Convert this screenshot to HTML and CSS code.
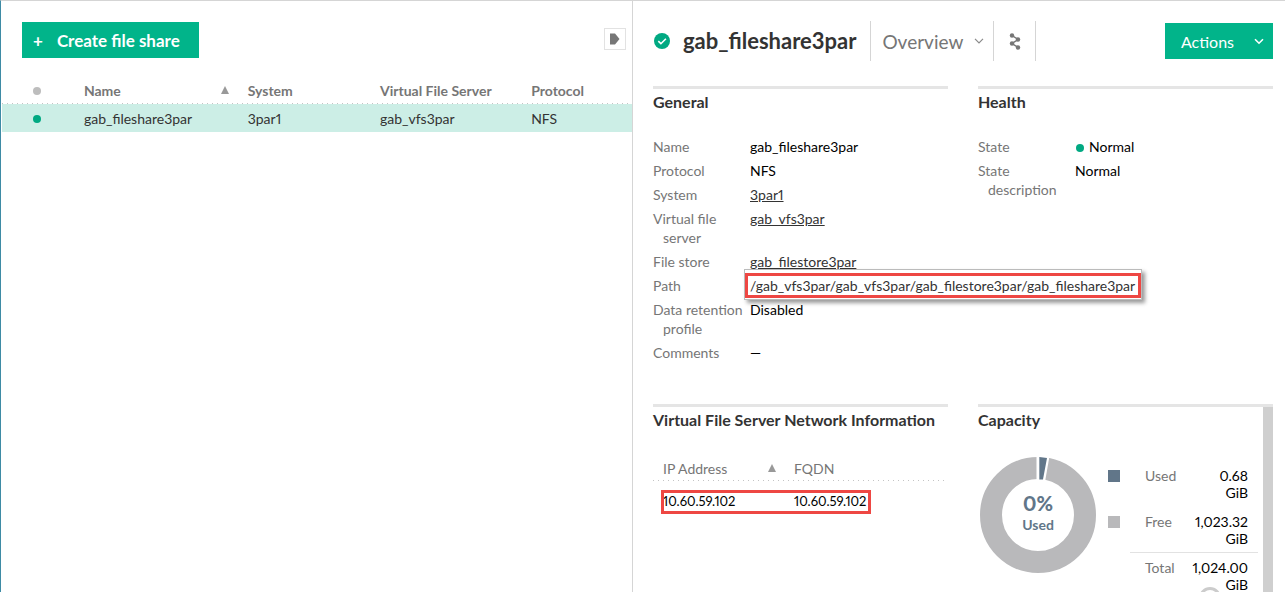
FILE: index.html
```html
<!DOCTYPE html>
<html lang="en">
<head>
<meta charset="utf-8">
<title>File shares</title>
<link rel="stylesheet" href="styles.css">
</head>
<body>
<div class="app">
  <section class="master" aria-label="File shares">
    <div class="toolbar">
      <button class="btn btn-create" type="button"><span class="plus">+</span>Create file share</button>
      <button class="toggle" type="button" aria-label="Expand list">
        <svg width="10" height="12" viewBox="0 0 10 12"><path d="M0 .5h5L9.500 6 5 11.500H0z" fill="#767676"/></svg>
      </button>
    </div>
    <table class="shares">
      <colgroup><col class="c-dot"><col class="c-name"><col class="c-system"><col class="c-vfs"><col class="c-protocol"></colgroup>
      <thead>
        <tr>
          <th class="status"><span class="dot dot-off"></span></th>
          <th><div class="sorted">Name<span class="sort"></span></div></th>
          <th>System</th><th>Virtual File Server</th><th>Protocol</th>
        </tr>
      </thead>
      <tbody>
        <tr>
          <td class="status"><span class="dot"></span></td>
          <td>gab_fileshare3par</td><td>3par1</td><td>gab_vfs3par</td><td>NFS</td>
        </tr>
      </tbody>
    </table>
  </section>

  <main class="details">
    <header class="head">
      <svg class="ok" width="16" height="16" viewBox="0 0 16 16"><circle cx="8" cy="8" r="8" fill="#01a982"/><path d="M4.300 8.200l2.600 2.500 5-5" fill="none" stroke="#fff" stroke-width="1.600"/></svg>
      <h1>gab_fileshare3par</h1>
      <button class="view" type="button">Overview
        <svg width="10" height="6" viewBox="0 0 10 6"><path d="M1 .8l4 4 4-4" fill="none" stroke="#8a8a8a" stroke-width="1.200"/></svg>
      </button>
      <button class="map" type="button" aria-label="Map view">
        <svg width="12" height="17" viewBox="0 0 12 17"><path d="M3 2.500l6 4-6 4 6 4" fill="none" stroke="#767676" stroke-width="1.500"/><g fill="#767676"><circle cx="3" cy="2.500" r="2.200"/><circle cx="9" cy="6.500" r="2.200"/><circle cx="3" cy="10.500" r="2.200"/><circle cx="9" cy="14.500" r="2.200"/></g></svg>
      </button>
      <button class="btn btn-actions" type="button">Actions
        <svg width="10" height="7" viewBox="0 0 10 7"><path d="M1 1.200l4 4 4-4" fill="none" stroke="#fff" stroke-width="1.600"/></svg>
      </button>
    </header>

    <div class="panels">
      <section class="panel">
        <h2>General</h2>
        <dl class="props">
          <dt>Name</dt><dd>gab_fileshare3par</dd>
          <dt>Protocol</dt><dd>NFS</dd>
          <dt>System</dt><dd><a href="#system">3par1</a></dd>
          <dt>Virtual file server</dt><dd><a href="#vfs">gab_vfs3par</a></dd>
          <dt>File store</dt><dd><a href="#store">gab_filestore3par</a></dd>
          <dt>Path</dt><dd class="path"><div class="callout"><div class="callout-text">/gab_vfs3par/gab_vfs3par/gab_filestore3par/gab_fileshare3par</div></div></dd>
          <dt>Data retention profile</dt><dd>Disabled</dd>
          <dt>Comments</dt><dd>—</dd>
        </dl>
      </section>

      <section class="panel">
        <h2>Health</h2>
        <dl class="props">
          <dt>State</dt><dd><span class="dot dot-inline"></span>Normal</dd>
          <dt>State description</dt><dd>Normal</dd>
        </dl>
      </section>

      <section class="panel">
        <h2>Virtual File Server Network Information</h2>
        <table class="network">
          <colgroup><col class="n-ip"><col></colgroup>
          <thead><tr><th><div class="sorted">IP Address<span class="sort"></span></div></th><th>FQDN</th></tr></thead>
          <tbody><tr><td class="marked">10.60.59.102<span class="mark"></span></td><td>10.60.59.102</td></tr></tbody>
        </table>
      </section>

      <section class="panel capacity">
        <div class="capacity-main">
          <h2>Capacity</h2>
          <div class="usage">
            <div class="donut">
              <svg viewBox="0 0 116 116"><circle cx="58" cy="58" r="47" fill="none" stroke="#b9b9bb" stroke-width="22"/><path d="M56.500 24V-1h13l-4.500 26z" fill="#fff"/><path d="M59.300 22.500V0l7.700 1-4 21.500z" fill="#617689"/></svg>
              <div class="donut-label"><strong>0%</strong><span>Used</span></div>
            </div>
            <table class="legend">
              <tbody>
                <tr><td class="key"><span class="swatch used"></span></td><th>Used</th><td class="amount">0.68<br>GiB</td></tr>
                <tr class="last"><td class="key"><span class="swatch free"></span></td><th>Free</th><td class="amount">1,023.32<br>GiB</td></tr>
                <tr class="total"><td class="key"></td><th>Total</th><td class="amount">1,024.00<br>GiB</td></tr>
              </tbody>
            </table>
          </div>
          <svg class="spinner" width="22" height="22" viewBox="0 0 22 22"><circle cx="11" cy="11" r="9.500" fill="none" stroke="#ccc" stroke-width="3"/></svg>
        </div>
        <div class="scrollbar"></div>
      </section>
    </div>
  </main>
</div>
</body>
</html>
```

FILE: styles.css
```css
* { box-sizing: border-box; }
body {
  margin: 0;
  font: 14px/19px Lato, "Liberation Sans", sans-serif;
  font-variant-numeric: proportional-nums;
  color: #000;
  background: #fff;
}
.app {
  display: grid;
  grid-template-columns: 631fr 653fr;
  height: 100vh;
  overflow: hidden;
  border-top: 1px solid #d5d5d5;
  border-left: 1px solid #3e8ba5;
}
button { font: inherit; border: 0; margin: 0; padding: 0; background: none; cursor: pointer; }
h1, h2, dl, dd { margin: 0; }
table { border-collapse: collapse; border-spacing: 0; }
th, td { padding: 0; text-align: left; }

.btn { height: 36px; background: #01b48a; color: #fff; display: flex; align-items: center; }

/* list */
.master { padding-left: 1px; min-width: 0; }
.toolbar { display: flex; justify-content: space-between; padding: 21px 6px 0 20px; }
.btn-create { padding: 0 19px 0 11px; font-size: 17px; font-weight: 700; gap: 14px; }
.toggle {
  width: 22px; height: 22px; margin-top: 6px;
  border: 1px solid #e2e2e2;
  display: flex; align-items: center; justify-content: center;
}
.shares { width: 100%; table-layout: fixed; margin-top: 20px; }
.c-dot { width: 13%; }
.c-name { width: 26%; }
.c-system { width: 21%; }
.c-vfs { width: 24%; }
.c-protocol { width: 16%; }
.shares th { height: 26px; padding-bottom: 2px; color: #767676; font-weight: 700; }
.shares thead, .network thead {
  background: repeating-linear-gradient(90deg, #c4c4c4 0 1px, transparent 1px 5px) bottom / 100% 1px no-repeat;
}
.shares td { height: 28px; background: #cceee6; color: #333; }
.shares .status { padding: 0 0 0 31px; }
.shares td.status { padding-top: 2px; }
.dot { display: block; width: 8px; height: 8px; border-radius: 50%; background: #01a982; }
.dot-off { background: #bdbdbd; }
.dot-inline { display: inline-block; margin: 0 5px 0 1px; }
.sorted { display: flex; align-items: center; justify-content: space-between; padding-right: 19px; }
.sort { border: 4px solid transparent; border-top: 0; border-bottom: 8px solid #999; }

/* details */
.details {
  min-width: 0;
  display: flex; flex-direction: column;
  padding: 20px 12px 0 20px;
  border-left: 1px solid #d5d5d5;
}
.head { display: flex; align-items: center; height: 40px; color: #767676; }
.ok { margin-left: 1px; }
h1 { margin: 0 14px 0 13px; font-size: 22px; line-height: 28px; font-weight: 700; color: #333; }
.view {
  height: 40px; padding: 0 9px 0 11px;
  display: flex; align-items: center; gap: 11px;
  border: solid #d5d5d5; border-width: 0 1px;
  font-size: 19px; color: #767676;
}
.map { width: 42px; height: 40px; border-right: 1px solid #d5d5d5; display: flex; align-items: center; justify-content: center; }
.btn-actions { margin-left: auto; padding: 0 9px 0 16px; gap: 20px; font-size: 16px; }

.panels {
  flex: 1; min-height: 0;
  margin-top: 25px;
  display: grid;
  grid-template-columns: 1fr 1fr;
  grid-template-rows: auto minmax(0, 1fr);
  gap: 42px 30px;
}
.panel { border-top: 3px solid #e5e5e5; min-width: 0; padding-top: 3px; }
h2 { font-size: 16px; line-height: 19px; font-weight: 700; color: #333; }
.props {
  display: grid;
  grid-template-columns: 92px 1fr;
  gap: 5px;
  margin-top: 26px;
}
dt { color: #767676; padding-left: 10px; text-indent: -10px; }
a { color: #333; text-decoration: underline; }
.path { position: relative; }
.callout {
  position: absolute; left: -6px; top: -7px;
  padding: 3px 0 1px;
  background: #fff;
  border: 1px solid #bbb;
  box-shadow: 3px 3px 4px rgba(0, 0, 0, .4);
}
.callout-text { padding: 0 3px 0 2px; border: 3px solid #ee4743; white-space: nowrap; color: #333; }

.network { width: 100%; table-layout: fixed; margin-top: 28px; }
.network th { height: 24px; padding: 0 0 2px 10px; font-weight: 400; color: #767676; }
.network td { height: 42px; padding: 0 0 2px 10px; font-size: 13px; }
.n-ip { width: 131px; }
.network .sorted { padding-right: 8px; }
.marked { position: relative; }
.mark { position: absolute; left: 8px; top: 9px; width: 210px; height: 24px; border: 3px solid #ee4743; }

.capacity { display: flex; padding-top: 0; }
.capacity-main { flex: 1; position: relative; padding-top: 3px; }
.scrollbar { width: 10px; background: #cfcfcf; }
.usage { display: flex; gap: 12px; padding: 28px 5px 0 2px; align-items: flex-start; }
.donut { position: relative; width: 116px; flex: none; }
.donut svg { display: block; width: 100%; }
.donut-label {
  position: absolute; inset: 0 0 6px;
  display: flex; flex-direction: column; align-items: center; justify-content: center;
  color: #617689; font-weight: 700;
}
.donut-label strong { font-size: 20px; line-height: 24px; }
.legend { flex: 1; margin-top: 5px; line-height: 17px; }
.legend tr { vertical-align: top; }
.legend th { font-weight: 400; color: #767676; padding-left: 15px; }
.legend td, .legend th { padding-top: 5px; padding-bottom: 7px; }
.legend .key { width: 22px; }
.legend .amount { text-align: right; padding-right: 10px; width: 76px; padding-left: 14px; }
.legend .last > * { padding-bottom: 5px; }
.legend .total > * { padding-bottom: 0; }
.legend .total th, .legend .total .amount { border-top: 1px solid #e2e2e2; padding-top: 6px; }
.swatch { display: block; width: 12px; height: 12px; margin-top: 3px; }
.used { background: #617689; }
.free { background: #b9b9bb; }
.spinner { position: absolute; right: 42px; top: 180px; }
```
